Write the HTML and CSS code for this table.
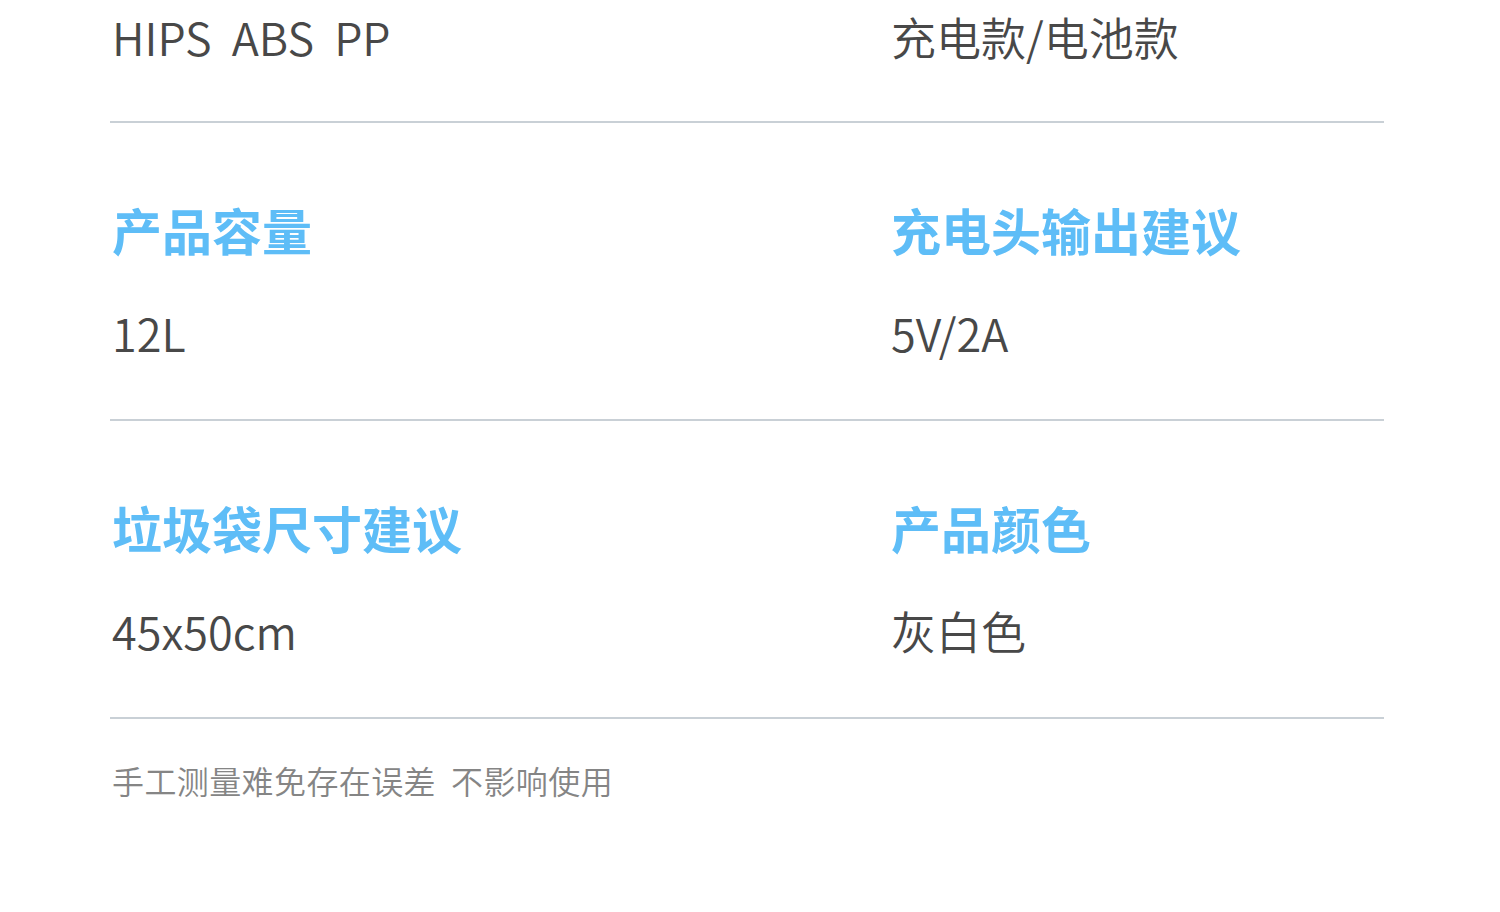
FILE: index.html
```html
<!DOCTYPE html>
<html lang="zh-CN">
<head>
<meta charset="utf-8">
<link rel="stylesheet" href="styles.css">
</head>
<body>
<div class="page">
  <section class="row row-first">
    <div class="cell"><div class="value">HIPS&nbsp; ABS&nbsp; PP</div></div>
    <div class="cell"><div class="value">充电款/电池款</div></div>
  </section>
  <section class="row">
    <div class="cell">
      <div class="title">产品容量</div>
      <div class="value">12L</div>
    </div>
    <div class="cell">
      <div class="title">充电头输出建议</div>
      <div class="value">5V/2A</div>
    </div>
  </section>
  <section class="row">
    <div class="cell">
      <div class="title">垃圾袋尺寸建议</div>
      <div class="value">45x50cm</div>
    </div>
    <div class="cell">
      <div class="title">产品颜色</div>
      <div class="value">灰白色</div>
    </div>
  </section>
  <p class="note">手工测量难免存在误差&nbsp;&nbsp;不影响使用</p>
</div>
</body>
</html>
```

FILE: styles.css
```css
html, body {
  margin: 0;
  padding: 0;
  background: #ffffff;
}
body {
  width: 1500px;
  height: 912px;
  overflow: hidden;
  font-family: "Noto Sans CJK SC", "Noto Sans", sans-serif;
}
.page {
  margin-left: 110px;
  width: 1274px;
}
.row {
  display: grid;
  grid-template-columns: 779px 1fr;
  padding: 76px 0 56px;
  border-bottom: 2px solid #c9d0d6;
}
.row-first {
  padding: 7px 0 54px;
}
.cell {
  display: flex;
  flex-direction: column;
  gap: 44px;
  padding-left: 2px;
}
.title {
  height: 60px;
  line-height: 60px;
  font-size: 50px;
  font-weight: 700;
  color: #5ebdf7;
}
.value {
  height: 60px;
  line-height: 60px;
  font-size: 45px;
  font-weight: 350;
  color: #484848;
}
.note {
  margin: 41px 0 0 2px;
  line-height: 40px;
  font-size: 32px;
  font-weight: 350;
  letter-spacing: 0.4px;
  color: #858585;
}
```
